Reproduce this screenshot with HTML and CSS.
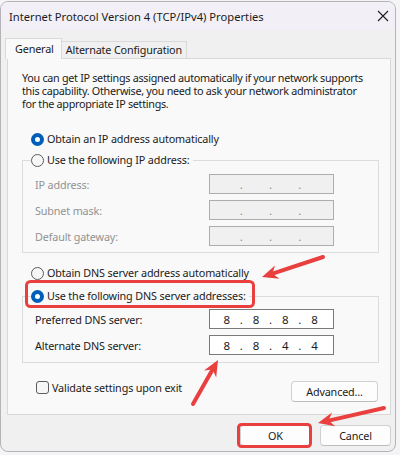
FILE: index.html
```html
<!DOCTYPE html>
<html>
<head>
<meta charset="utf-8">
<link rel="stylesheet" href="styles.css">
</head>
<body>
<div class="window">
  <div class="titlebar">
    <span class="title">Internet Protocol Version 4 (TCP/IPv4) Properties</span>
    <svg class="close" width="12" height="12" viewBox="0 0 12 12"><path d="M1 1 L11 11 M11 1 L1 11" stroke="#1c1c1c" stroke-width="1.1" fill="none"/></svg>
  </div>
  <div class="tabs">
    <div class="tab active">General</div>
    <div class="tab">Alternate Configuration</div>
  </div>
  <div class="panel">
    <p class="intro">You can get IP settings assigned automatically if your network supports<br>this capability. Otherwise, you need to ask your network administrator<br>for the appropriate IP settings.</p>
    <div class="opt opt-ip-auto"><span class="radio on"></span>Obtain an IP address automatically</div>
    <fieldset class="group g1">
      <legend class="opt"><span class="radio"></span>Use the following IP address:</legend>
      <div class="row"><span class="lbl dis">IP address:</span><span class="ipf dis"><span class="oct"></span><span class="dot">.</span><span class="oct"></span><span class="dot">.</span><span class="oct"></span><span class="dot">.</span><span class="oct"></span></span></div>
      <div class="row"><span class="lbl dis">Subnet mask:</span><span class="ipf dis"><span class="oct"></span><span class="dot">.</span><span class="oct"></span><span class="dot">.</span><span class="oct"></span><span class="dot">.</span><span class="oct"></span></span></div>
      <div class="row"><span class="lbl dis">Default gateway:</span><span class="ipf dis"><span class="oct"></span><span class="dot">.</span><span class="oct"></span><span class="dot">.</span><span class="oct"></span><span class="dot">.</span><span class="oct"></span></span></div>
    </fieldset>
    <div class="opt opt-dns-auto"><span class="radio"></span>Obtain DNS server address automatically</div>
    <fieldset class="group g2">
      <legend class="opt"><span class="radio on"></span>Use the following DNS server addresses:</legend>
      <div class="row"><span class="lbl">Preferred DNS server:</span><span class="ipf"><span class="oct">8</span><span class="dot">.</span><span class="oct">8</span><span class="dot">.</span><span class="oct">8</span><span class="dot">.</span><span class="oct">8</span></span></div>
      <div class="row"><span class="lbl">Alternate DNS server:</span><span class="ipf"><span class="oct">8</span><span class="dot">.</span><span class="oct">8</span><span class="dot">.</span><span class="oct">4</span><span class="dot">.</span><span class="oct">4</span></span></div>
    </fieldset>
    <div class="bottom-row">
      <div class="check-opt"><span class="checkbox"></span>Validate settings upon exit</div>
      <button class="btn adv">Advanced...</button>
    </div>
  </div>
  <div class="actions">
    <button class="btn ok">OK</button>
    <button class="btn cancel">Cancel</button>
  </div>
</div>
<svg class="annot" width="400" height="455" viewBox="0 0 400 455">
  <g fill="#e9403f" stroke="none">
    <rect x="26.5" y="281.5" width="227" height="25" rx="4" fill="none" stroke="#e9403f" stroke-width="3"/>
    <rect x="238.5" y="424.5" width="72" height="22" rx="3" fill="none" stroke="#e9403f" stroke-width="3"/>
    <line x1="323" y1="257" x2="272.5" y2="273.6" stroke="#e9403f" stroke-width="4" stroke-linecap="round"/>
    <polygon points="262,277 275,265.4 272.5,273.6 279.4,278.7"/>
    <line x1="193" y1="404" x2="212.6" y2="369.6" stroke="#e9403f" stroke-width="4" stroke-linecap="round"/>
    <polygon points="218,360 216.2,377.4 212.6,369.6 204,370.4"/>
    <line x1="384" y1="408" x2="328.7" y2="420.6" stroke="#e9403f" stroke-width="4" stroke-linecap="round"/>
    <polygon points="318,423 332,412.6 328.7,420.6 335.2,426.2"/>
  </g>
</svg>
</body>
</html>
```

FILE: styles.css
```css
* { box-sizing: border-box; }
html, body { margin: 0; padding: 0; }
body {
  width: 400px;
  height: 455px;
  background: #f4f4f6;
  font-family: "Noto Sans", "Open Sans", sans-serif;
  font-size: 10.8px;
  letter-spacing: -0.15px;
  color: #1b1b1b;
  overflow: hidden;
}
.window {
  margin-top: 1px;
  width: 396px;
  height: 451px;
  border: 1px solid #b4b4b8;
  border-radius: 8px;
  background: #f0f0f0;
  overflow: hidden;
}
.titlebar {
  height: 28px;
  background: #f2f0f6;
  display: flex;
  align-items: center;
  justify-content: space-between;
  padding: 0 6px 0 8px;
}
.title { font-size: 11.2px; letter-spacing: 0; }
.close { display: block; margin-top: 0; }
.tabs {
  display: flex;
  align-items: flex-end;
  margin: 8px 0 0 4px;
  height: 20px;
}
.tab {
  height: 17px;
  line-height: 15px;
  padding: 0 4px 0 4px;
  border: 1px solid #d9d9d9;
  border-bottom: none;
  background: #f0f0f0;
  margin-left: -1px;
}
.tab.active {
  height: 21px;
  line-height: 19px;
  padding: 0 7px 0 9px;
  background: #f9f9f9;
  margin-left: 0;
  margin-bottom: -1px;
  position: relative;
  z-index: 2;
}
.panel {
  margin: 0 4px 0 6px;
  border: 1px solid #d9d9d9;
  background: #f9f9f9;
  padding: 0 11px 12px 14px;
}
.intro {
  margin: 12px 0 0 0;
  line-height: 13px;
  letter-spacing: -0.3px;
  white-space: nowrap;
}
.opt {
  display: flex;
  align-items: center;
  height: 16px;
  line-height: 16px;
  white-space: nowrap;
}
.opt-ip-auto { margin: 21px 0 0 9px; }
.opt-dns-auto { margin: 12px 0 0 9px; }
.radio {
  width: 13px;
  height: 13px;
  border-radius: 50%;
  border: 1px solid #5c5c5c;
  background: #f6f6f6;
  margin-right: 3px;
  flex: none;
}
.radio.on {
  border: 4px solid #005fb8;
  background: #ffffff;
}
.group {
  margin: 5px 0 0 0;
  border: 1px solid #dcdcdc;
  padding: 6px 12px 6px 12px;
  min-width: 0;
}
.group legend {
  padding: 0 3px 0 0;
  margin-left: -4px;
}
.g1 { margin-top: 5px; }
.g2 { margin-top: 7px; padding-top: 5px; padding-bottom: 7px; }
.row {
  display: flex;
  align-items: center;
  height: 20px;
}
.row + .row { margin-top: 6px; }
.lbl { width: 174px; flex: none; }
.lbl.dis { color: #929292; }
.ipf {
  width: 125px;
  height: 20px;
  border: 1px solid #7a7a7a;
  background: #ffffff;
  display: flex;
  align-items: center;
  padding: 0 6px 0 4px;
  font-size: 11.5px;
}
.ipf.dis {
  background: #f0f0f0;
  border-color: #adadad;
  color: #8e8e8e;
}
.oct { flex: 1; text-align: center; }
.dot { width: 4px; text-align: center; }
.bottom-row {
  margin-top: 18px;
  display: flex;
  justify-content: space-between;
  align-items: flex-start;
}
.check-opt {
  display: flex;
  align-items: center;
  height: 13px;
  line-height: 13px;
  margin-left: 14px;
}
.checkbox {
  width: 13px;
  height: 13px;
  border: 1px solid #5c5c5c;
  border-radius: 3px;
  background: #f6f6f6;
  margin-right: 3px;
}
.btn {
  font-family: inherit;
  font-size: 10.8px;
  letter-spacing: -0.15px;
  color: #1b1b1b;
  background: #fdfdfd;
  border: 1px solid #d0d0d0;
  border-bottom-color: #bcbcbc;
  border-radius: 4px;
  padding: 0;
  height: 21px;
  line-height: 18px;
}
.adv { width: 87px; margin-right: 1px; }
.actions {
  display: flex;
  justify-content: flex-end;
  gap: 9px;
  margin: 10px 4px 0 0;
}
.actions .btn { width: 71px; height: 21px; }
.annot {
  position: absolute;
  left: 0;
  top: 0;
  pointer-events: none;
}
```
